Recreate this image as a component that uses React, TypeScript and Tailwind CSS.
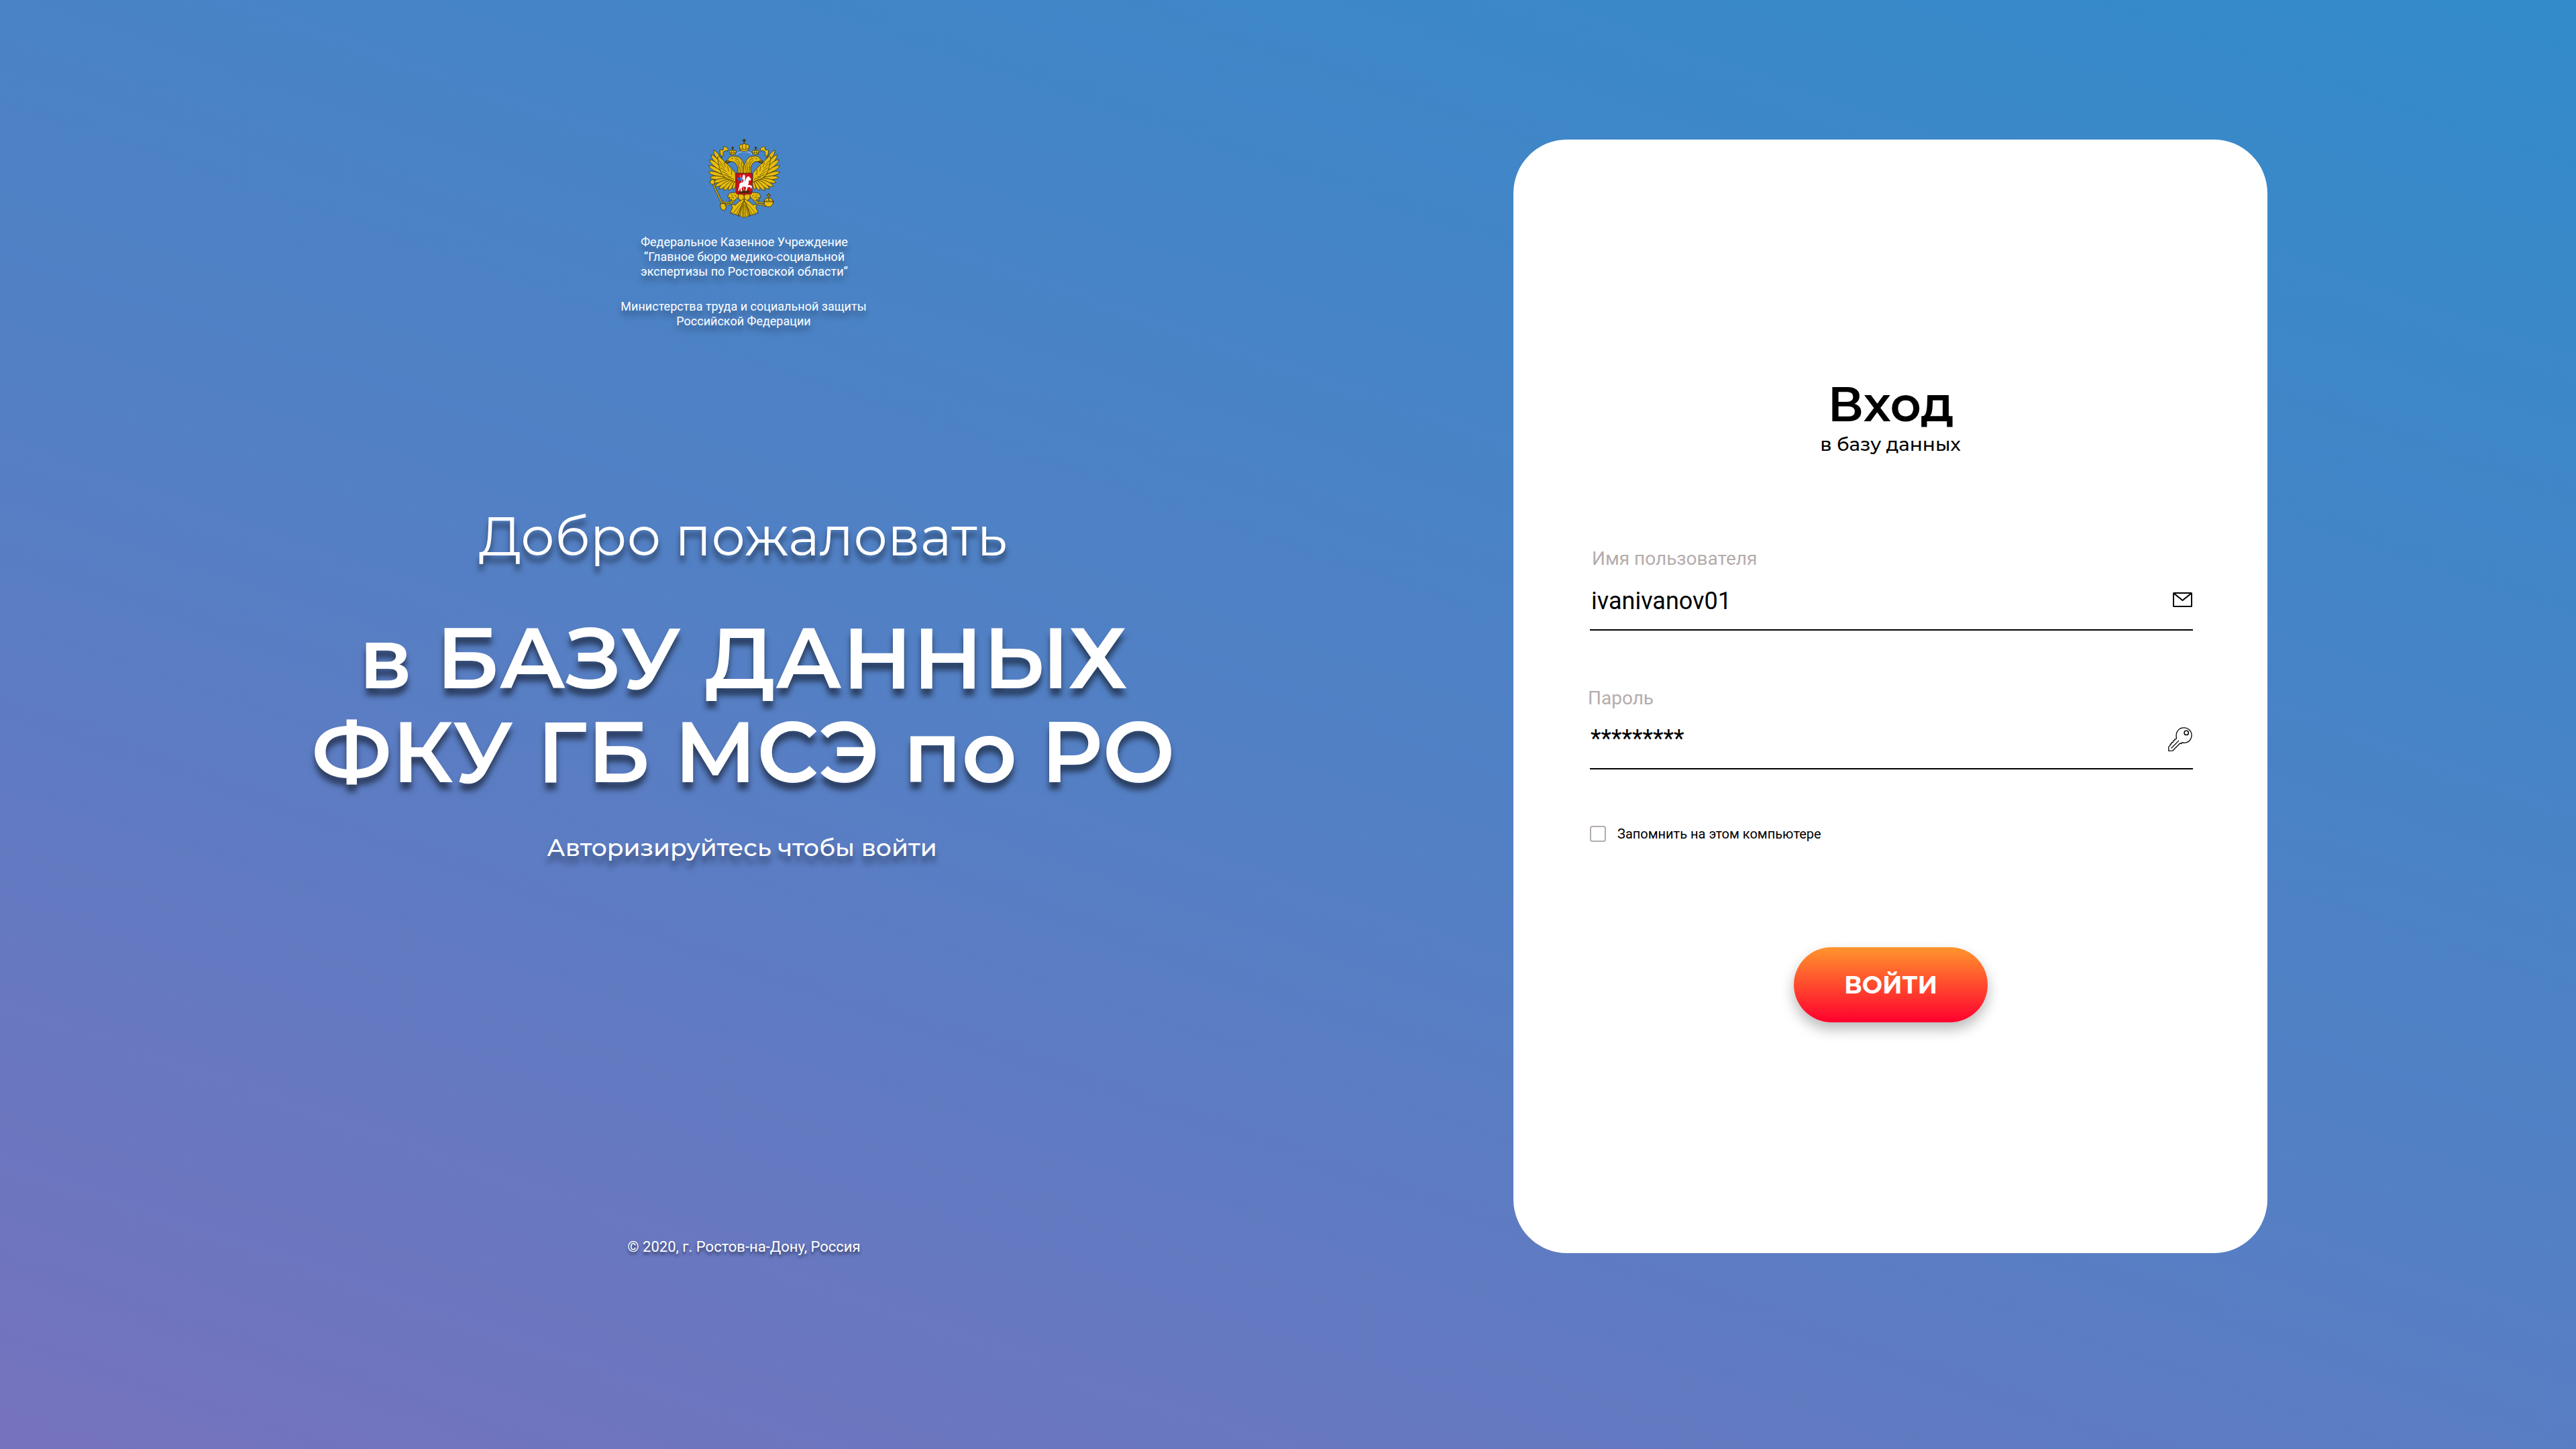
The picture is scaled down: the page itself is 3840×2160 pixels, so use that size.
const GOLD = "#e6bd10";
const INK = "#3b2f08";

// Tip, root and half-width of every feather of the left wing, outermost first.
const FEATHERS: [number, number, number, number, number][] = [
  [104, 104, 168, 200, 17],
  [93, 124, 166, 208, 17],
  [86, 146, 166, 212, 17],
  [82, 172, 166, 218, 17],
  [82, 200, 168, 224, 17],
  [88, 224, 172, 228, 17],
  [98, 246, 180, 226, 16],
  [110, 264, 186, 226, 16],
  [128, 275, 192, 226, 16],
  [148, 281, 196, 228, 15],
  [170, 281, 200, 230, 14],
  [190, 278, 203, 232, 12],
];

function feather([tx, ty, rx, ry, w]: [number, number, number, number, number]) {
  const dx = tx - rx;
  const dy = ty - ry;
  const len = Math.hypot(dx, dy);
  const nx = (-dy / len) * w;
  const ny = (dx / len) * w;
  const mx = rx + dx * 0.84;
  const my = ry + dy * 0.84;
  return `M${rx} ${ry} Q${mx + nx} ${my + ny} ${tx} ${ty} Q${mx - nx} ${my - ny} ${rx} ${ry}Z`;
}

function EagleHalf() {
  return (
    <g fill={GOLD} stroke={INK} strokeWidth="2.4" strokeLinejoin="round" strokeLinecap="round">
      {/* ribbon */}
      <path d="M168 98 Q158 84 146 90 Q152 98 144 104 Q134 100 131 104 Q134 112 132 124 Q138 118 140 138 Q144 126 148 122 Q142 112 152 108 Q160 102 164 108Z" />
      {/* wing */}
      {FEATHERS.map((f, i) => (
        <path key={i} d={feather(f)} />
      ))}
      <path d="M122 136 Q126 124 134 136 Q150 152 168 168 Q184 186 200 204 L202 246 Q186 236 170 232 Q150 226 138 204 Q126 176 122 136Z" />
      <path
        d="M128 150 L144 168 M132 166 L152 184 M136 182 L160 198 M142 198 L168 212 M150 212 L180 222 M166 222 L194 232 M150 158 L156 178 M166 174 L170 196 M182 190 L184 212"
        fill="none"
        strokeWidth="2"
      />
      {/* thigh and leg */}
      <path d="M204 290 L178 292 Q164 302 168 314 L176 312 L172 326 L184 320 L184 332 Q196 328 204 318 L222 302Z" />
      <path d="M196 326 Q176 336 158 336 L142 330 M188 334 Q172 344 160 344 L146 350" strokeWidth="7" fill="none" />
      <path d="M196 326 Q176 336 158 336 L142 330 M188 334 Q172 344 160 344 L146 350" stroke={GOLD} strokeWidth="3.4" fill="none" />
      <path d="M180 300 L190 306 M182 312 L194 314 M196 300 L204 310" fill="none" strokeWidth="2" />
      {/* neck and head */}
      <path d="M240 206 L207 204 Q214 184 206 170 Q200 156 188 154 L176 156 Q166 158 162 164 L158 152 Q166 144 172 138 Q180 128 196 130 Q214 130 222 140 Q234 152 240 172Z" />
      <path d="M172 148 Q164 148 155 158 Q166 152 178 154 M160 162 L180 153" strokeWidth="3" fill={GOLD} />
      <circle cx="186" cy="141" r="2.4" fill={INK} stroke="none" />
      <path
        d="M206 138 Q218 150 220 166 M200 148 Q214 158 216 182 M228 156 Q226 178 222 202 M216 176 Q218 190 214 202 M234 170 Q232 188 230 204 M196 136 L206 146"
        fill="none"
        strokeWidth="2"
      />
      {/* small crown */}
      <path d="M178 122 L174 108 Q178 102 188 104 Q200 102 204 108 L200 122 Q190 126 178 122Z" />
      <path d="M188 89 V102 M184 94 H192" fill="none" strokeWidth="4" />
      <path d="M178 116 H200 M184 106 V118 M194 106 V118" fill="none" strokeWidth="2" />
      {/* lower body */}
      <path d="M214 296 L239 296 V336 L226 330 Q224 322 214 318Z" />
      {/* tail */}
      <path d="M238 318 Q214 330 200 346 Q190 340 182 346 Q190 352 186 362 Q178 370 178 384 Q188 372 190 390 Q198 378 204 392 Q210 384 212 392 Q220 366 238 330Z" />
      <path d="M236 330 Q224 350 214 396 Q222 388 226 396 Q232 404 240 398 V330Z" />
      <path d="M232 334 Q212 350 192 380 M234 342 Q216 362 204 386 M230 352 Q224 370 222 390 M234 346 Q230 370 232 394" fill="none" strokeWidth="2" />
    </g>
  );
}

function CoatOfArms() {
  return (
    <svg viewBox="79 51 321 352" className="h-[119px] w-[109px]" aria-hidden="true">
      {/* blue ribbon between the crowns */}
      <path d="M204 122 Q222 108 239 110 Q256 108 274 122" fill="none" stroke="#a9bfe6" strokeWidth="4" />
      <EagleHalf />
      <g transform="translate(478 0) scale(-1 1)">
        <EagleHalf />
      </g>
      <g fill={GOLD} stroke={INK} strokeWidth="2.6" strokeLinejoin="round" strokeLinecap="round">
        {/* great crown */}
        <path d="M222 106 L217 86 Q222 74 232 78 Q239 70 246 78 Q256 74 261 86 L256 106 Q239 112 222 106Z" />
        <path d="M239 56 V72 M233 61 H245" fill="none" strokeWidth="5" />
        <path d="M221 98 Q239 104 257 98 M231 80 L232 100 M247 80 L246 100" fill="none" strokeWidth="2.2" />
        {/* sceptre */}
        <path d="M99 246 L145 346" fill="none" strokeWidth="8" />
        <path d="M99 246 L145 346" fill="none" stroke={GOLD} strokeWidth="4" />
        <path d="M92 236 L100 232 L110 240 L108 252 L98 256 L89 248Z" />
        <path d="M136 340 L152 338 L160 356 L152 370 L140 366 L134 354Z" />
        {/* orb */}
        <circle cx="347" cy="334" r="20" />
        <path d="M347 296 V330 M340 303 H354 M327 330 H367" fill="none" strokeWidth="5" />
        <path d="M347 298 V330 M342 303 H352 M330 330 H364" fill="none" stroke={GOLD} strokeWidth="1.6" />
      </g>
      {/* shield with the rider */}
      <path
        d="M203 206 H274 V290 Q274 298 266 298 H250 Q241 298 238 305 Q236 298 226 298 H211 Q203 298 203 290Z"
        fill="#cf1019"
        stroke="#7a1408"
        strokeWidth="2.4"
      />
      <path d="M209 226 Q220 220 232 228 L230 238 Q220 242 211 236Z" fill="#1f62c0" />
      <path d="M212 292 Q226 278 240 284 Q256 278 270 290 L256 292 Q240 296 212 292Z" fill="#3a2b0c" />
      <path d="M222 286 L240 280" stroke="#3f7a2a" strokeWidth="3" />
      <path
        d="M218 252 Q226 244 238 246 Q246 240 248 228 Q256 214 262 222 L270 232 L266 238 L260 236 Q260 250 256 258 Q268 256 274 264 L270 276 L266 266 L254 268 L250 282 L244 284 L248 266 L232 264 Q226 272 230 284 L224 286 L222 270 L216 284 L212 282 Q218 268 218 252Z"
        fill="#fff"
      />
      <path d="M233 214 Q240 208 243 216 L244 232 L240 248 L232 250 L236 236 L230 230Z" fill="#e9edf3" />
      <path d="M222 214 L238 280" stroke="#dfe4ea" strokeWidth="2" />
    </svg>
  );
}

function EnvelopeIcon() {
  return (
    <svg viewBox="0 0 29 22" className="h-[22px] w-[29px]" fill="none" stroke="#000" strokeWidth="2" strokeLinejoin="round">
      <rect x="1" y="1" width="27" height="20" rx="0.6" />
      <path d="M1.4 1.4 L14.5 12 L27.6 1.4" />
    </svg>
  );
}

function KeyIcon() {
  return (
    <svg viewBox="0 0 36 36" className="h-[36px] w-[36px]" fill="none" stroke="#000" strokeWidth="1.3" strokeLinejoin="round" strokeLinecap="round">
      <path d="M12.4 15.8 C11.2 10 13.4 4.6 17.6 2.2 C22.4 -0.2 28.4 0.6 32 4.2 C35.6 7.8 36 13.8 33.4 18.2 C30.6 22.6 25.6 24 20.6 22.8 L20 24.6 L17.8 24 L6.6 35.2 L0.8 35.3 L0.8 29.4 L3.4 26.6 L3.2 25.2 L5.2 24.8 L5.2 22.8 L7.4 22.4 L7.6 20.2 L9.8 19.8 L9.8 17.8 L12 17.6 Z" />
      <circle cx="27.2" cy="8.4" r="3.2" strokeWidth="1.5" />
      <path d="M15.6 20.4 L5 31" />
    </svg>
  );
}

export default function App() {
  return (
    <div className="flex h-[2160px] w-[3840px] items-start overflow-hidden bg-[linear-gradient(199deg,#328bca_0%,#557fc4_56%,#7672be_100%)] pt-[206px] font-['Roboto',sans-serif]">
      <section className="flex w-[2216px] flex-col items-center text-center text-white">
        <div className="ml-[3px]">
          <CoatOfArms />
        </div>
        <p className="mt-[25px] ml-[3px] text-[18px] leading-[22px] [text-shadow:0_8px_8px_rgba(0,0,0,0.35)]">
          Федеральное Казенное Учреждение
          <br />
          “Главное бюро медико-социальной
          <br />
          экспертизы по Ростовской области”
        </p>
        <p className="mt-[30px] ml-[1px] text-[18px] leading-[22px] [text-shadow:0_8px_8px_rgba(0,0,0,0.35)]">
          Министерства труда и социальной защиты
          <br />
          Российской Федерации
        </p>
        <p className="mt-[261px] -ml-[1px] font-['Montserrat','Inter',sans-serif] text-[80px] leading-[98px] font-normal whitespace-nowrap [text-shadow:0_10px_8px_rgba(0,0,0,0.5)]">
          Добро пожаловать
        </p>
        <h1 className="mt-[61px] flex flex-col items-center font-['Montserrat','Inter',sans-serif] text-[128px] leading-[140px] font-semibold whitespace-nowrap [text-shadow:0_11px_8px_rgba(0,0,0,0.5)]">
          <span className="tracking-[0.2px]">в БАЗУ ДАННЫХ</span>
          <span>ФКУ ГБ МСЭ по РО</span>
        </h1>
        <p className="mt-[51px] -ml-[4px] font-['Montserrat','Inter',sans-serif] text-[36px] leading-[44px] font-medium whitespace-nowrap [text-shadow:0_11px_8px_rgba(0,0,0,0.4)]">
          Авторизируйтесь чтобы войти
        </p>
        <footer className="mt-[561px] ml-[2px] text-[22px] leading-[26px] [text-shadow:0_4px_4px_rgba(0,0,0,0.5)]">
          © 2020, г. Ростов-на-Дону, Россия
        </footer>
      </section>

      <form className="mt-[2px] ml-[40px] flex h-[1660px] w-[1124px] flex-col rounded-[80px] bg-white pt-[350px] pr-[111px] pl-[114px] text-black">
        <h2 className="-ml-[2px] text-center font-['Montserrat','Inter',sans-serif] text-[72px] leading-[88px] font-semibold">Вход</h2>
        <p className="-mt-px -ml-[3px] text-center font-['Montserrat','Inter',sans-serif] text-[28px] leading-[34px] font-medium">
          в базу данных
        </p>

        <label className="mt-[138px] ml-[3px] text-[28px] leading-[32px] text-[#b5acac]">Имя пользователя</label>
        <div className="mt-[26px] flex justify-between border-b-2 border-black pr-[1px] pb-[21px] pl-[2px]">
          <span className="text-[36px] leading-[42px]">ivanivanov01</span>
          <span className="mt-[8px]">
            <EnvelopeIcon />
          </span>
        </div>

        <label className="mt-[85px] -ml-[3px] text-[28px] leading-[32px] text-[#b5acac]">Пароль</label>
        <div className="mt-[23px] flex justify-between border-b-2 border-black pr-[1px] pb-[23px] pl-[1px]">
          <span className="text-[36px] leading-[42px]">*********</span>
          <span className="mt-[4px]">
            <KeyIcon />
          </span>
        </div>

        <label className="mt-[84px] flex items-center gap-[17px] text-[20px] leading-[24px]">
          <span className="size-[24px] rounded-[4px] border-2 border-[#b5acac]" />
          Запомнить на этом компьютере
        </label>

        <button
          type="button"
          className="mt-[157px] -ml-[2px] h-[112px] w-[289px] self-center rounded-full bg-[linear-gradient(180deg,#ff952d_0%,#ff002e_100%)] font-['Montserrat','Inter',sans-serif] text-[36px] leading-[44px] font-bold text-white shadow-[0_10px_20px_rgba(0,0,0,0.28)]"
        >
          ВОЙТИ
        </button>
      </form>
    </div>
  );
}
